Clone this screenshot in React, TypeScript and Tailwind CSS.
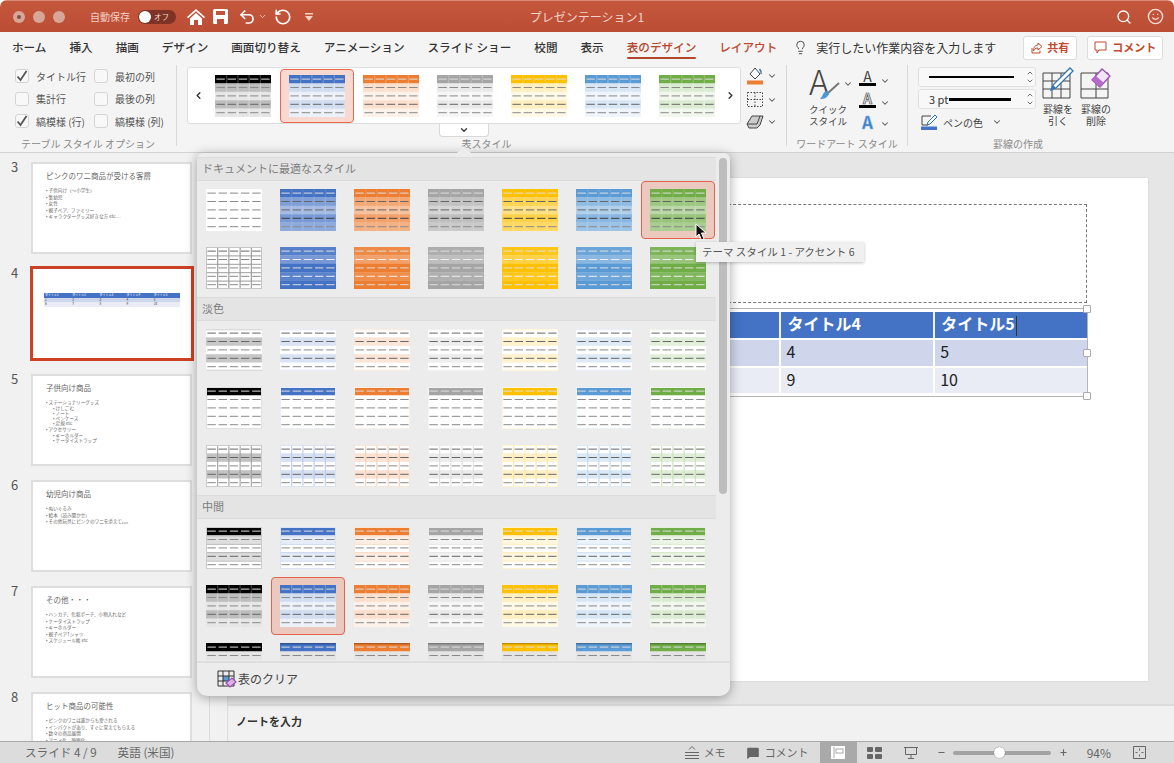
import { ChevronDown, ChevronLeft, ChevronRight, ChevronUp, Lightbulb, MessageSquare, Minus, Plus, RotateCcw, Search, Smile, Undo2 } from "lucide-react"

const ACCENTS = ["#000000", "#4472c4", "#ed7d31", "#a5a5a5", "#ffc000", "#5b9bd5", "#70ad47"]

// blends a hex colour with white (amount 1 = pure colour)
function tint(hex: string, amount: number) {
  const n = parseInt(hex.slice(1), 16)
  const ch = [(n >> 16) & 255, (n >> 8) & 255, n & 255].map((v) => Math.round(255 - (255 - v) * amount))
  return `rgb(${ch[0]},${ch[1]},${ch[2]})`
}

type Look = {
  rows: string[]
  dash: string[]
  vline?: string
  hline?: string
  border?: string
  top?: string
  bottom?: string
}

const G = "#8a8a8a"
const D = "#666666"
const W = "#dedede"

const looks = {
  plain: (): Look => ({ rows: Array(5).fill("#fff"), dash: Array(5).fill(G) }),
  grid: (): Look => ({ rows: Array(5).fill("#fff"), dash: [D, G, G, G, G], vline: "#8c8c8c", hline: "#9c9c9c", border: "#c4c4c4" }),
  strong: (c: string): Look => ({
    rows: [c, tint(c, 0.68), tint(c, 0.48), tint(c, 0.72), tint(c, 0.6)],
    dash: [W, D, D, "#3f3f3f", G],
    vline: "#ffffff22",
  }),
  themed: (c: string): Look => ({
    rows: [tint(c, 0.9), tint(c, 0.72), c, tint(c, 0.88), c],
    dash: [W, "#eee", W, "#eee", "#ddd"],
  }),
  band: (c: string): Look => {
    const b = tint(c, c === "#000000" ? 0.22 : 0.2)
    return { rows: ["#fff", b, "#fff", b, "#fff"], dash: [D, D, G, D, G], top: tint(c, 0.14), bottom: tint(c, 0.14) }
  },
  lines: (c: string): Look => ({
    rows: [c, "#fff", "#fff", "#fff", "#fff"],
    dash: [W, G, G, G, G],
    border: tint(c, 0.12),
  }),
  gridBand: (c: string): Look => {
    const b = tint(c, c === "#000000" ? 0.24 : 0.22)
    return {
      rows: ["#fff", b, "#fff", b, "#fff"],
      dash: [D, D, G, D, G],
      vline: tint(c, 0.4),
      border: tint(c, 0.2),
    }
  },
  medium: (c: string): Look => ({
    rows: [c, tint(c, 0.13), "#fff", tint(c, 0.13), "#fff"],
    dash: [W, G, G, D, G],
    hline: tint(c, 0.3),
    border: tint(c, 0.2),
  }),
  banded: (c: string): Look => ({
    rows: [c, tint(c, c === "#000000" ? 0.26 : 0.25), tint(c, 0.1), tint(c, c === "#000000" ? 0.26 : 0.25), tint(c, 0.1)],
    dash: [W, G, G, D, G],
    vline: "#ffffff44",
  }),
  header: (c: string): Look => ({
    rows: [c, "#e4e4e4", "#ececec", "#ececec", "#ececec"],
    dash: [W, G, G, G, G],
    top: "#00000044",
  }),
}

function Thumb({ look }: { look: Look }) {
  const rh = 8.4
  const cw = 11.2
  return (
    <svg width="56" height="42" className="block">
      {look.rows.map((fill, r) => (
        <rect key={r} x="0" y={r * rh} width="56" height={rh + 0.2} fill={fill} />
      ))}
      {look.vline && [1, 2, 3, 4].map((i) => <rect key={i} x={i * cw} y="0" width="1" height="42" fill={look.vline} />)}
      {look.hline && [1, 2, 3, 4].map((i) => <rect key={i} x="0" y={i * rh} width="56" height="1" fill={look.hline} />)}
      {look.dash.map((fill, r) =>
        [0, 1, 2, 3, 4].map((c) => <rect key={`${r}-${c}`} x={c * cw + 1.4} y={r * rh + 3.6} width="8.4" height="1" fill={fill} />),
      )}
      {look.top && <rect x="0" y="0" width="56" height="1.4" fill={look.top} />}
      {look.bottom && <rect x="0" y="40.6" width="56" height="1.4" fill={look.bottom} />}
      {look.border && <rect x="0.5" y="0.5" width="55" height="41" fill="none" stroke={look.border} />}
    </svg>
  )
}

function GalleryRow({ make, selected }: { make: (c: string, i: number) => Look; selected?: number }) {
  return (
    <div className="grid grid-cols-[repeat(7,74px)]">
      {ACCENTS.map((c, i) => (
        <div
          key={c}
          className={`flex h-[58px] w-[74px] items-center justify-center rounded-[4px] border ${
            selected === i ? "border-[#e2644a] bg-[#ecc9bf]" : "border-transparent"
          }`}
        >
          <Thumb look={make(c, i)} />
        </div>
      ))}
    </div>
  )
}

function SectionHeader({ label }: { label: string }) {
  return (
    <div className="flex h-6 items-center border-y border-[#dcdcdc] bg-[#e4e4e4] pb-px pl-[5px] text-[11px] text-[#7c7c7c]">{label}</div>
  )
}

function StylePopup() {
  return (
    <div className="absolute left-[197px] top-[153px] z-20 h-[543px] w-[533px] rounded-b-[10px] rounded-t-[6px] bg-[#ececec] shadow-[0_2px_12px_rgba(0,0,0,0.35)]">
      <div className="absolute left-[262px] top-[-5px] size-[10px] rotate-45 bg-[#ececec]" />
      <div className="relative h-[508px] w-[519px] overflow-hidden pt-1">
        <SectionHeader label="ドキュメントに最適なスタイル" />
        <GalleryRow make={(c, i) => (i === 0 ? looks.plain() : looks.strong(c))} selected={6} />
        <GalleryRow make={(c, i) => (i === 0 ? looks.grid() : looks.themed(c))} />
        <SectionHeader label="淡色" />
        <GalleryRow make={(c) => looks.band(c)} />
        <GalleryRow make={(c) => looks.lines(c)} />
        <GalleryRow make={(c) => looks.gridBand(c)} />
        <SectionHeader label="中間" />
        <GalleryRow make={(c) => looks.medium(c)} />
        <GalleryRow make={(c) => looks.banded(c)} selected={1} />
        <GalleryRow make={(c) => looks.header(c)} />
      </div>
      <div className="absolute right-[3px] top-[5px] h-[336px] w-[8px] rounded-full bg-[#bdbdbd]" />
      <div className="flex h-[35px] items-center border-t-2 border-[#dedede] pb-px pl-[20px] text-[12px] text-[#444]">
        <svg width="20" height="18" viewBox="0 0 20 18" className="mr-px">
          <rect x="6" y="6" width="6" height="5" fill="#5b9bd5" />
          <path d="M1 1h16v15H1zM1 6h16M1 11h16M6 1v15M12 1v15" fill="none" stroke="#333" strokeWidth="1" />
          <path d="M9 13l6-5 4 4-6 5z" fill="#d9b3e6" stroke="#9c4fb5" strokeWidth="1.2" />
        </svg>
        表のクリア
      </div>
    </div>
  )
}

function Check({ on, label }: { on?: boolean; label: string }) {
  return (
    <div className="flex h-[22.5px] items-center gap-[7px] text-[10px] text-[#555]">
      <span className="flex size-[14px] items-center justify-center rounded-[3px] border border-[#d4d4d4] bg-[#f8f8f8]">
        {on && (
          <svg width="12" height="12" viewBox="0 0 12 12">
            <path d="M1.5 6.5L4.5 10L10.5 1" fill="none" stroke="#555" strokeWidth="1.8" />
          </svg>
        )}
      </span>
      {label}
    </div>
  )
}

function GroupLabel({ children }: { children: string }) {
  return <div className="absolute bottom-[-5px] left-0 right-0 text-center text-[10px] leading-[14px] text-[#8a8a8a]">{children}</div>
}

function RibbonChevron() {
  return <ChevronDown size={10} strokeWidth={2.5} className="text-[#555]" />
}

function FontA({ kind }: { kind: number }) {
  if (kind === 2)
    return (
      <span className="w-[17px] text-center text-[17px] font-bold leading-[15px] text-[#3d7cc9] [-webkit-text-stroke:0.5px_#8fc1ea]">A</span>
    )
  return (
    <span className={`w-[17px] border-b-[3px] border-black text-center text-[14px] leading-[13px] ${kind === 1 ? "font-bold text-[#ddd] [-webkit-text-stroke:0.6px_#444]" : "text-[#444]"}`}>
      A
    </span>
  )
}

function Ribbon() {
  return (
    <div className="flex h-[88px] border-b border-[#d2d2d2] bg-[#f4f4f4]">
      <div className="relative h-[81px] w-[177px] border-r border-[#d9d9d9] pl-[15px]">
        <div className="grid grid-cols-[79px_80px]">
          <Check on label="タイトル行" />
          <Check label="最初の列" />
          <Check label="集計行" />
          <Check label="最後の列" />
          <Check on label="縞模様 (行)" />
          <Check label="縞模様 (列)" />
        </div>
        <GroupLabel>テーブル スタイル オプション</GroupLabel>
      </div>

      <div className="relative ml-[10px] flex h-[81px] w-[600px] border-r border-[#d9d9d9] pt-[2px]">
        <div className="flex h-[57px] w-[554px] items-center justify-between rounded-[3px] border border-[#dedede] bg-white pl-[5px] pr-[4px]">
          <ChevronLeft size={11} strokeWidth={3} className="text-[#333]" />
          <div className="grid grid-cols-[repeat(7,74px)]">
            {ACCENTS.map((c, i) => (
              <div
                key={c}
                className={`flex h-[54px] items-center justify-center rounded-[4px] border ${
                  i === 1 ? "border-[#e8694a] bg-[#f8d9d2]" : "border-transparent"
                }`}
              >
                <Thumb look={looks.banded(c)} />
              </div>
            ))}
          </div>
          <ChevronRight size={11} strokeWidth={3} className="text-[#333]" />
        </div>
        <div className="absolute left-[252px] top-[59px] z-10 flex h-[13px] w-[50px] items-center justify-center rounded-b-[4px] border border-t-0 border-[#d8d8d8] bg-white">
          <ChevronDown size={10} strokeWidth={3} className="text-[#333]" />
        </div>
        <div className="ml-[5px] flex flex-col gap-[6px]">
          <div className="flex items-center gap-[3px]">
            <svg width="18" height="18" viewBox="0 0 18 18">
              <path d="M9 1l5 6-5 5-5-5z" fill="#fff" stroke="#444" />
              <path d="M13.5 2c1.5 1.5 2 3 1.5 5" fill="none" stroke="#2e75b6" strokeWidth="1.6" />
              <rect x="1" y="13.5" width="16" height="4" fill="#ed7d31" />
            </svg>
            <RibbonChevron />
          </div>
          <div className="flex items-center gap-[3px]">
            <svg width="18" height="17" viewBox="0 0 18 17">
              <path d="M1.5 1.5h15v14h-15zM9 1.5v14M1.5 8.5h15" fill="none" stroke="#444" strokeDasharray="1.5 1.5" />
            </svg>
            <RibbonChevron />
          </div>
          <div className="flex items-center gap-[3px]">
            <svg width="18" height="15" viewBox="0 0 18 15">
              <path d="M1 10l5-8h11l-3 9-3 3H3z" fill="#ccc" stroke="#444" />
              <path d="M1 10h10l3-8" fill="none" stroke="#444" />
            </svg>
            <RibbonChevron />
          </div>
        </div>
        <GroupLabel>表スタイル</GroupLabel>
      </div>

      <div className="relative h-[81px] w-[121px] border-r border-[#d9d9d9]">
        <div className="flex pl-[22px] pt-[3px]">
          <div className="flex w-[44px] flex-col">
            <div className="flex items-center">
              <div className="relative h-[32px] w-[30px]">
                <span className="absolute left-0 top-[-7px] text-[34px] font-light leading-[40px] text-[#444]">A</span>
                <svg width="22" height="20" viewBox="0 0 22 20" className="absolute left-[10px] top-[14px]">
                  <path d="M20 1L9 11" stroke="#777" strokeWidth="2" />
                  <path d="M1 17c4 0 8-1 9-6l-3-2c-3 1-3 5-6 8z" fill="#4f97d8" />
                </svg>
              </div>
              <span className="ml-[8px]">
                <RibbonChevron />
              </span>
            </div>
            <div className="mt-[3px] w-[38px] whitespace-nowrap text-center text-[9.5px] leading-[12px] text-[#444]">
              クイック
              <br />
              スタイル
            </div>
          </div>
          <div className="ml-[6px] flex flex-col gap-[6px] pt-[2px]">
            {[0, 1, 2].map((k) => (
              <div key={k} className="flex items-end gap-[4px]">
                <FontA kind={k} />
                <RibbonChevron />
              </div>
            ))}
          </div>
        </div>
        <GroupLabel>ワードアート スタイル</GroupLabel>
      </div>

      <div className="relative h-[81px] w-[266px] pl-[10px] pt-[2px]">
        <div className="flex">
          <div className="w-[118px]">
            <div className="flex h-[20px] items-center justify-between rounded-[3px] border border-[#e0e0e0] bg-[#f8f8f8] pl-[10px] pr-[1px]">
              <div className="h-[2px] w-[85px] bg-black" />
              <span className="flex flex-col text-[#555]">
                <ChevronUp size={8} strokeWidth={2.5} />
                <ChevronDown size={8} strokeWidth={2.5} />
              </span>
            </div>
            <div className="mt-[2px] flex h-[20px] items-center justify-between rounded-[3px] border border-[#e0e0e0] bg-[#f8f8f8] pl-[10px] pr-[1px]">
              <span className="flex items-center gap-[1px] text-[11px] text-[#333]">
                3 pt
                <span className="h-[3px] w-[62px] bg-black" />
              </span>
              <span className="flex flex-col text-[#555]">
                <ChevronUp size={8} strokeWidth={2.5} />
                <ChevronDown size={8} strokeWidth={2.5} />
              </span>
            </div>
            <div className="mt-[3px] flex h-[20px] items-center gap-[5px] pl-[3px] text-[10px] text-[#444]">
              <svg width="17" height="16" viewBox="0 0 17 16">
                <path d="M1 11V2h9M1 11h6" fill="none" stroke="#444" />
                <path d="M14 1l2 2-7 7-3 1 1-3z" fill="#fff" stroke="#2e75b6" />
                <rect x="0" y="12.5" width="16" height="3.5" fill="#4472c4" />
              </svg>
              ペンの色
              <span className="ml-[4px]">
                <RibbonChevron />
              </span>
            </div>
          </div>
          <div className="ml-[3px] flex w-[38px] flex-col items-center">
            <svg width="32" height="32" viewBox="0 0 32 32">
              <path d="M1 6h27v25H1zM1 14h27M1 22h27M10 6v25M19 6v25" fill="none" stroke="#444" />
              <path d="M28 1l3 3-17 17-5 2 2-5z" fill="#fff" stroke="#2e75b6" strokeWidth="1.3" />
              <path d="M9 23l2-5 3 3z" fill="#2e75b6" />
            </svg>
            <div className="mt-[4px] text-center text-[10px] leading-[12px] text-[#444]">
              罫線を
              <br />
              引く
            </div>
          </div>
          <div className="flex w-[38px] flex-col items-center">
            <svg width="32" height="32" viewBox="0 0 32 32">
              <path d="M1 6h27v25H1zM16 6v25M1 22h27" fill="none" stroke="#444" />
              <path d="M12 13l10-11 8 7-10 11z" fill="#f3e3f7" stroke="#9c4fb5" strokeWidth="1.3" />
              <path d="M12 13l4-4 8 7-4 4z" fill="#b56cc9" />
            </svg>
            <div className="mt-[4px] text-center text-[10px] leading-[12px] text-[#444]">
              罫線の
              <br />
              削除
            </div>
          </div>
        </div>
        <div className="absolute bottom-[-5px] left-[85px] text-[10px] leading-[14px] text-[#8a8a8a]">罫線の作成</div>
      </div>
    </div>
  )
}

const DECK: { no: number; title: string; items: { text: string; sub?: boolean }[] }[] = [
  {
    no: 3,
    title: "ピンクのワニ商品が受ける客層",
    items: [{ text: "子供向け（～小学生）" }, { text: "集幼児" }, { text: "女性" }, { text: "親子ペア、ファミリー" }, { text: "キャラクターグッズ好きな方 etc…" }],
  },
  {
    no: 5,
    title: "子供向け商品",
    items: [
      { text: "ステーショナリーグッズ" },
      { text: "けしごむ", sub: true },
      { text: "ノート", sub: true },
      { text: "ペンケース", sub: true },
      { text: "定規 etc", sub: true },
      { text: "アクセサリー" },
      { text: "キーホルダー", sub: true },
      { text: "ケータイストラップ", sub: true },
    ],
  },
  {
    no: 6,
    title: "幼児向け商品",
    items: [{ text: "ぬいぐるみ" }, { text: "絵本（読み聞かせ）" }, { text: "その他玩具にピンクのワニを添えて。。。" }],
  },
  {
    no: 7,
    title: "その他・・・",
    items: [{ text: "ハンカチ、化粧ポーチ、小物入れなど" }, { text: "ケータイストラップ" }, { text: "キーホルダー" }, { text: "親子ペアTシャツ" }, { text: "スケジュール帳 etc" }],
  },
  {
    no: 8,
    title: "ヒット商品の可能性",
    items: [{ text: "ピンクのワニは誰からも愛される" }, { text: "インパクトがあり、すぐに覚えてもらえる" }, { text: "数々の商品展開" }, { text: "アニメ化、映画化" }],
  },
]

function SlideThumb({ slide }: { slide: (typeof DECK)[number] }) {
  return (
    <div className="flex h-[106px] items-start">
      <div className="w-[31px] pl-[11px] text-[13px] leading-[10px] text-[#555]">{slide.no}</div>
      <div className="h-[92px] w-[161px] shrink-0 overflow-hidden border-2 border-[#dedede] bg-white pl-[13px] pt-[7px] text-[#666]">
        <div className="mb-[6px] text-[7.5px] leading-[10px]">{slide.title}</div>
        {slide.items.map((it) => (
          <div key={it.text} className={`whitespace-nowrap text-[4.6px] ${it.sub ? "pl-[7px] leading-[5.2px]" : "leading-[6.6px]"}`}>
            • {it.text}
          </div>
        ))}
      </div>
    </div>
  )
}

function ActiveThumb() {
  return (
    <div className="flex h-[106px] items-start">
      <div className="w-[31px] pl-[11px] text-[13px] leading-[10px] text-[#555]">4</div>
      <div className="-ml-px -mt-[2px] h-[95px] w-[164px] shrink-0 border-[3px] border-[#cc4125] bg-white pl-[11px] pt-[24px]">
        <div className="w-[136px] text-[3px] leading-[4.6px]">
          <div className="grid grid-cols-5 bg-[#4472c4] text-white">
            {[1, 2, 3, 4, 5].map((n) => (
              <span key={n} className="pl-px">
                タイトル{n}
              </span>
            ))}
          </div>
          <div className="grid grid-cols-5 bg-[#cfd5ea] text-[#333]">
            {[1, 2, 3, 4, 5].map((n) => (
              <span key={n} className="pl-px">
                {n}
              </span>
            ))}
          </div>
          <div className="grid grid-cols-5 bg-[#e9ebf5] text-[#333]">
            {[6, 7, 8, 9, 10].map((n) => (
              <span key={n} className="pl-px">
                {n}
              </span>
            ))}
          </div>
        </div>
      </div>
    </div>
  )
}

function Handle({ className }: { className: string }) {
  return <span className={`absolute size-[8px] rounded-[1px] border border-[#aaa] bg-white ${className}`} />
}

function SlideCanvas() {
  const cols = ["タイトル1", "タイトル2", "タイトル3", "タイトル4", "タイトル5"]
  const rows = [
    ["1", "2", "3", "4", "5"],
    ["6", "7", "8", "9", "10"],
  ]
  return (
    <div className="h-[503px] w-[894px] bg-white pl-[63px] pt-[26px] shadow-[0_0_2px_rgba(0,0,0,0.1)]">
      <div className="h-[99px] w-[770px] border border-dashed border-[#777]" />
      <div className="relative mt-[5px] h-[89px] w-[771px] border border-[#b5b5b5] py-[3px]">
        <div className="h-[26px] bg-[#4472c4] text-[16px] font-bold leading-[22px] text-white">
          <div className="grid h-full grid-cols-5">
            {cols.map((c, i) => (
              <div key={c} className="border-l-2 border-[#f2f2f2] pl-[6px] first:border-l-0">
                {c}
                {i === 4 && <span className="ml-px inline-block h-[20px] w-px bg-[#333] align-middle" />}
              </div>
            ))}
          </div>
        </div>
        {rows.map((r, ri) => (
          <div key={ri} className={`mt-[2px] grid h-[25.5px] grid-cols-5 text-[16px] leading-[22px] text-[#222] ${ri === 0 ? "bg-[#cfd5ea]" : "bg-[#e9ebf5]"}`}>
            {r.map((v) => (
              <div key={v} className="border-l-2 border-white pl-[5px] first:border-l-0">
                {v}
              </div>
            ))}
          </div>
        ))}
        <Handle className="-right-[4px] -top-[4px]" />
        <Handle className="-right-[4px] top-[40px]" />
        <Handle className="-bottom-[4px] -right-[4px]" />
      </div>
    </div>
  )
}

function StatusBar() {
  return (
    <div className="flex h-[22px] items-center border-t border-[#a8a8a8] bg-[#dcdcdc] text-[11px] text-[#666]">
      <span className="ml-[25px] text-[11.6px]">スライド 4 / 9</span>
      <span className="ml-[21px] text-[11.6px]">英語 (米国)</span>
      <div className="ml-auto flex h-full items-center">
        <svg width="14" height="13" viewBox="0 0 14 13">
          <path d="M0 6.5h14M0 9.5h14M0 12.5h14M4 3.5l3-3 3 3" fill="none" stroke="#666" />
        </svg>
        <span className="ml-[5px]">メモ</span>
        <MessageSquare size={14} fill="#666" strokeWidth={0} className="ml-[20px]" />
        <span className="ml-[5px]">コメント</span>
        <div className="ml-[11px] flex h-full w-[37px] items-center justify-center bg-[#a9a9a9]">
          <svg width="14" height="13" viewBox="0 0 14 13">
            <rect width="14" height="13" fill="#fff" />
            <path d="M3 1v11" stroke="#a9a9a9" />
            <rect x="5" y="3" width="7" height="4" fill="none" stroke="#a9a9a9" />
          </svg>
        </div>
        <div className="ml-[10px] grid w-[15px] grid-cols-2 gap-x-[2px] gap-y-[2px]">
          {[0, 1, 2, 3].map((i) => (
            <span key={i} className="h-[5px] rounded-[1px] bg-[#666]" />
          ))}
        </div>
        <svg width="14" height="14" viewBox="0 0 14 14" className="ml-[22px]">
          <path d="M0 1.5h14M1.500 1.500v7h11v-7M7 8.500v4M4 12.500h6" fill="none" stroke="#666" />
        </svg>
        <Minus size={9} strokeWidth={3} className="ml-[19px] text-[#666]" />
        <div className="relative ml-[7px] h-[4px] w-[98px] rounded-full bg-[#a3a3a3]">
          <span className="absolute left-[41px] top-[-4px] size-[11px] rounded-full bg-white shadow-[0_0_1px_rgba(0,0,0,0.6)]" />
        </div>
        <Plus size={9} strokeWidth={3} className="ml-[8px] text-[#666]" />
        <span className="ml-[19px] text-[12px]">94%</span>
        <svg width="13" height="13" viewBox="0 0 13 13" className="ml-[22px] mr-[28px]">
          <path d="M.5.5h12v12H.5zM6.500 2.500v2M6.500 8.500v2M2.500 6.500h2M8.500 6.500h2" fill="none" stroke="#666" />
        </svg>
      </div>
    </div>
  )
}

export default function App() {
  const tabs = ["ホーム", "挿入", "描画", "デザイン", "画面切り替え", "アニメーション", "スライド ショー", "校閲", "表示"]
  return (
    <div className="relative h-[763px] w-[1174px] overflow-hidden rounded-t-[7px] bg-[#f1f1f1] font-['Noto_Sans_CJK_JP','Liberation_Sans',sans-serif]">
      {/* Title bar */}
      <div className="relative flex h-[32px] items-center border-t border-[#d88a76] bg-gradient-to-b from-[#c5573d] to-[#bb4d34]">
        <div className="ml-[13px] flex gap-[8px]">
          <span className="flex size-[12px] items-center justify-center rounded-full bg-[#d7a699]">
            <span className="size-[4px] rounded-full bg-[#7b5247]" />
          </span>
          <span className="size-[12px] rounded-full bg-[#d7a699]" />
          <span className="size-[12px] rounded-full bg-[#d7a699]" />
        </div>
        <span className="ml-[25px] text-[10px] text-[#f3cfc5]">自動保存</span>
        <div className="ml-[8px] flex h-[14px] w-[38px] items-center rounded-full bg-[#7e3325] pl-px">
          <span className="size-[12px] rounded-full bg-white" />
          <span className="ml-[3px] text-[7.5px] text-[#f0d8d0]">オフ</span>
        </div>
        <svg width="18" height="16" viewBox="0 0 18 16" className="ml-[11px]">
          <path d="M9 0L0 8l1 1.2L9 2.300l8 6.900L18 8zM3 9.500V16h4v-5h4v5h4V9.500L9 4z" fill="#fff" />
        </svg>
        <svg width="15" height="15" viewBox="0 0 15 15" className="ml-[8px]">
          <path fillRule="evenodd" d="M0 1.500A1.500 1.500 0 011.500 0h12A1.500 1.500 0 0115 1.500v12a1.500 1.500 0 01-1.500 1.500h-12A1.500 1.500 0 010 13.500zM3 2v4h9V2zM4 10v5h7v-5z" fill="#fff" />
        </svg>
        <Undo2 size={18} strokeWidth={2.2} className="ml-[10px] text-white" />
        <ChevronDown size={9} strokeWidth={2.5} className="ml-[2px] text-[#f3cfc5]" />
        <RotateCcw size={18} strokeWidth={2.2} className="ml-[7px] text-white" />
        <svg width="8" height="8" viewBox="0 0 8 8" className="ml-[13px]">
          <path d="M0 0h8v1.500H0zM0 3h8L4 8z" fill="#f3cfc5" />
        </svg>
        <span className="absolute left-0 right-0 text-center text-[12px] text-[#f0d5cd]">プレゼンテーション1</span>
        <div className="relative ml-auto mr-[10px] flex items-center gap-[15px]">
          <Search size={16} className="text-white" />
          <Smile size={17} className="text-[#f3dcd6]" />
        </div>
      </div>

      {/* Tabs */}
      <div className="flex h-[33px] items-center bg-[#f4f4f4] pb-[2px] pl-[12px] text-[11.6px] font-medium text-[#333]">
        <div className="flex gap-[23px]">
          {tabs.map((t) => (
            <span key={t}>{t}</span>
          ))}
          <span className="relative text-[#b5462c]">
            表のデザイン
            <span className="absolute bottom-[-3px] left-0 right-0 h-[2px] rounded-full bg-[#b5462c]" />
          </span>
          <span className="text-[#c0492e]">レイアウト</span>
        </div>
        <Lightbulb size={15} strokeWidth={1.5} className="ml-[16px] text-[#444]" />
        <span className="ml-[8px] text-[12px] font-normal">実行したい作業内容を入力します</span>
        <button className="ml-[27px] flex h-[24px] w-[54px] items-center justify-center gap-[4px] rounded-[3px] border border-[#dcdcdc] bg-white text-[11px] font-bold text-[#c0492e]">
          <svg width="12" height="12" viewBox="0 0 12 12">
            <path d="M7 1l4 3.500L7 8V6C4.500 6 3 7 2.500 9 2.500 5.500 4 3 7 3zM1 6v5h8V8.500" fill="none" stroke="#c0492e" />
          </svg>
          共有
        </button>
        <button className="ml-[10px] flex h-[24px] w-[76px] items-center justify-center gap-[5px] rounded-[3px] border border-[#dcdcdc] bg-white text-[11px] font-bold text-[#c0492e]">
          <svg width="13" height="13" viewBox="0 0 13 13">
            <path d="M1 1h11v8H5l-2 3V9H1z" fill="none" stroke="#c0492e" />
          </svg>
          コメント
        </button>
      </div>

      <Ribbon />

      {/* Work area */}
      <div className="flex h-[588px]">
        <div className="h-full w-[210px] overflow-hidden border-r border-[#dcdcdc] pt-[9px]">
          <SlideThumb slide={DECK[0]} />
          <ActiveThumb />
          {DECK.slice(1).map((s) => (
            <SlideThumb key={s.no} slide={s} />
          ))}
        </div>
        <div className="w-[18px] border-r border-[#dcdcdc]" />
        <div className="flex flex-1 flex-col">
          <div className="h-[551px] bg-[#e6e6e6] pl-[26px] pt-[25px]">
            <SlideCanvas />
          </div>
          <div className="flex h-[37px] items-center border-t-2 border-[#dcdcdc] bg-[#f1f1f1] pb-[4px] pl-[8px] text-[11px] font-bold text-[#333]">ノートを入力</div>
        </div>
      </div>

      <StatusBar />

      <StylePopup />

      {/* Tooltip and pointer */}
      <div className="absolute left-[696px] top-[242px] z-30 flex h-[20px] w-[168px] items-center bg-[#f0f0f0] pl-[6px] text-[10.5px] text-[#555] shadow-[0_1px_3px_rgba(0,0,0,0.25)]">
        テーマ スタイル 1 - アクセント 6
      </div>
      <svg width="12" height="18" viewBox="0 0 12 18" className="absolute left-[695px] top-[223px] z-40">
        <path d="M1 1v13l3-3 2.500 6 2.500-1-2.500-6H11z" fill="#111" stroke="#fff" strokeWidth="1" />
      </svg>
    </div>
  )
}
